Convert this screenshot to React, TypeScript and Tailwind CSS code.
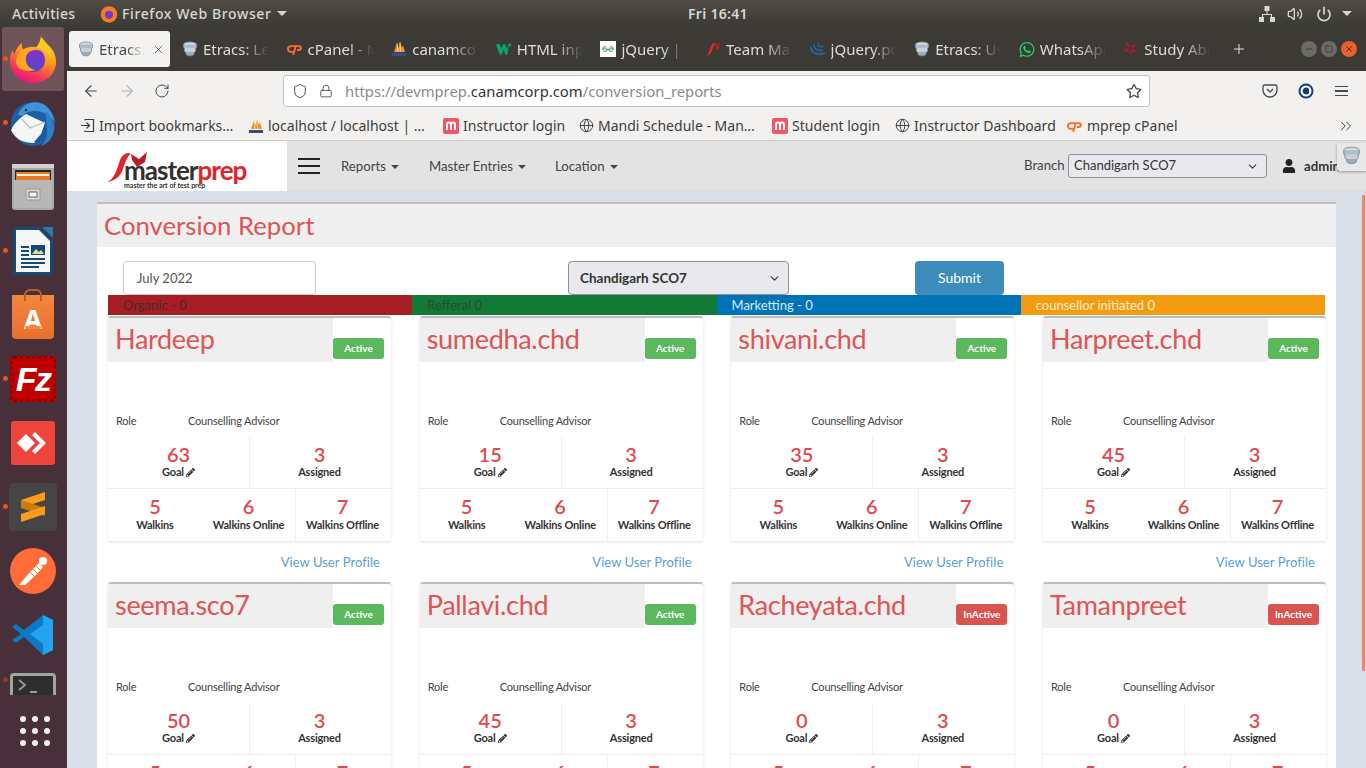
import { FaWhatsapp, FaPencilAlt, FaUser, FaRegStar } from 'react-icons/fa';
import { ChevronDown, ArrowLeft, ArrowRight, RotateCw, Lock, Shield, Globe, ChevronsRight, Plus, X, Minus, Square, Power, Volume2 } from 'lucide-react';

const SANS = "font-['Noto_Sans',sans-serif]";
const PAGE = "font-['Lato','Noto_Sans',sans-serif]";

const DbIcon = ({ size = 16 }: { size?: number }) => (
	<svg width={size} height={size} viewBox="0 0 16 16">
		<ellipse cx="8" cy="3.5" rx="6.5" ry="2.5" fill="#d5dde4" stroke="#7d8a96" strokeWidth="0.8" />
		<path d="M1.5 3.5v3c0 1.4 2.9 2.5 6.5 2.5s6.500-1.100 6.500-2.500v-3" fill="#aebbc6" stroke="#7d8a96" strokeWidth="0.8" />
		<path d="M2.500 7v3c0 1.300 2.500 2.300 5.500 2.300s5.500-1 5.500-2.300V7" fill="#c6d0d8" stroke="#7d8a96" strokeWidth="0.8" />
		<path d="M4 11v2c0 1 1.800 1.800 4 1.800s4-.8 4-1.800v-2" fill="#9fadb9" stroke="#7d8a96" strokeWidth="0.8" />
	</svg>
);

const CpanelIcon = () => (
	<svg width="17" height="12" viewBox="0 0 17 12">
		<path d="M6 2H4a4 4 0 0 0 0 8h2l1-2H4.200a2 2 0 0 1 0-4H8L5.500 12h2.300L10 4h2.600a1 1 0 0 1 0 2H11l-.6 2h2.400a3 3 0 0 0 0-6H6z" fill="#ff6c2c" />
	</svg>
);

const PmaIcon = () => (
	<svg width="16" height="16" viewBox="0 0 16 16">
		<path d="M3 11L6 2l1.500 5L9 1l2 6 1-3 2 7z" fill="#f0902a" />
		<path d="M6 2l1 9M9 1l.5 10" stroke="#fff" strokeWidth="0.6" />
		<rect x="1" y="12" width="14" height="3" fill="#2f4f86" />
	</svg>
);

const MIcon = () => (
	<svg width="16" height="16" viewBox="0 0 16 16">
		<rect width="16" height="16" rx="2" fill="#ee5763" />
		<path d="M4 12V6.500a1.800 1.800 0 0 1 4 0V12M8 6.500a1.800 1.800 0 0 1 4 0V12" stroke="#fff" strokeWidth="2" fill="none" />
	</svg>
);

const W3Icon = () => (
	<svg width="17" height="12" viewBox="0 0 17 12">
		<path d="M0 1h4l2 5 1.500-5h2L12 6l1-5h1l-2 11h-2L8 6l-2 6H4z" fill="#04aa6d" />
		<rect x="14" y="0" width="2" height="3" fill="#04aa6d" />
	</svg>
);

const GfgIcon = () => (
	<svg width="16" height="16" viewBox="0 0 16 16">
		<rect width="16" height="16" fill="#fff" />
		<path d="M7.500 8H2.500a2.500 2.500 0 0 1 4-1.800M7.500 8a2.500 2.500 0 0 1-4.400 1.600M8.500 8h5a2.500 2.500 0 0 0-4-1.800M8.500 8a2.500 2.500 0 0 0 4.400 1.600" stroke="#2f8d46" strokeWidth="1" fill="none" />
	</svg>
);

const SwooshIcon = ({ size = 14 }: { size?: number }) => (
	<svg width={size} height={size} viewBox="0 0 14 14">
		<path d="M1 13C4 11 4 5 6.500 2.500 7.500 1.500 9 1 9.500 2 8 3 7 6 6 9 5 11.500 3 13 1 13z" fill="#e0252b" />
		<path d="M9 2l2 2 2-3-.5 5L10.500 8 9 4z" fill="#b81f25" />
	</svg>
);

const JqIcon = () => (
	<svg width="16" height="16" viewBox="0 0 16 16" fill="none" stroke="#1a6fb3">
		<path d="M1 6c0 6 7 9 14 6" strokeWidth="1.600" />
		<path d="M4 3.500c-.5 4 4 7 9 5.500" strokeWidth="1.400" />
		<path d="M8 1.500c-.5 3 2 5 5.500 4" strokeWidth="1.200" />
	</svg>
);

const StudyIcon = () => (
	<svg width="14" height="16" viewBox="0 0 14 16" fill="#c8102e">
		<path d="M2 0l4 6-4-1zM0 7l6 1.500L2 11zM5 10l3-1-1 6zM7 5l6-2-5 4.500zM8 8.500l6 1-5 2z" />
	</svg>
);

const tabs = [
	{ t: 'Etracs: Le', i: <DbIcon /> },
	{ t: 'cPanel - Main', i: <CpanelIcon /> },
	{ t: 'canamcorp', i: <PmaIcon /> },
	{ t: 'HTML inpu', i: <W3Icon /> },
	{ t: 'jQuery | dat', i: <GfgIcon /> },
	{ t: 'Team Mas', i: <SwooshIcon size={16} /> },
	{ t: 'jQuery.pos', i: <JqIcon /> },
	{ t: 'Etracs: Us', i: <DbIcon /> },
	{ t: 'WhatsApp', i: <FaWhatsapp size={17} className="text-[#25d366]" /> },
	{ t: 'Study Abr', i: <StudyIcon /> },
];

const bookmarks = [
	{ w: 'w-[169px]', t: 'Import bookmarks…', i: <ImportIcon /> },
	{ w: 'w-[195px]', t: 'localhost / localhost | …', i: <PmaIcon /> },
	{ w: 'w-[135px]', t: 'Instructor login', i: <MIcon /> },
	{ w: 'w-[194px]', t: 'Mandi Schedule - Man…', i: <Globe size={15} strokeWidth={1.5} /> },
	{ w: 'w-[122px]', t: 'Student login', i: <MIcon /> },
	{ w: 'w-[173px]', t: 'Instructor Dashboard', i: <Globe size={15} strokeWidth={1.5} /> },
	{ w: 'w-[130px]', t: 'mprep cPanel', i: <CpanelIcon /> },
];

function ImportIcon() {
	return (
		<svg width="15" height="15" viewBox="0 0 15 15" fill="none" stroke="#3d3d3d" strokeWidth="1.200">
			<path d="M5 2.500V1.500h8.500v12H5v-1M1 7.500h8M6.500 4.500l3 3-3 3" />
		</svg>
	);
}

const FirefoxLogo = () => (
	<svg width="46" height="48" viewBox="0 0 46 48">
		<defs>
			<linearGradient id="ffa" x1="0.800" y1="0" x2="0.350" y2="1">
				<stop offset="0" stopColor="#ffe226" />
				<stop offset="0.450" stopColor="#ff9a1a" />
				<stop offset="0.800" stopColor="#f8345a" />
				<stop offset="1" stopColor="#e8128a" />
			</linearGradient>
			<linearGradient id="ffb" x1="0.600" y1="0" x2="0.400" y2="1">
				<stop offset="0" stopColor="#8a2fc8" />
				<stop offset="1" stopColor="#4f4ac8" />
			</linearGradient>
		</defs>
		<path d="M31 1c1 5 6 7 10 12 4 5 5 10 5 14 0 12-10 21-23 21C10 48 0 38 0 26c0-5 1-8 2.500-11 .5 2 1 3 2 4C6 14 9 10 12 8c-.5 3 0 5 1.500 7 3-2 8-2 12-2 3-3 5-7 5.500-12z" fill="url(#ffa)" />
		<circle cx="23" cy="25" r="12" fill="url(#ffb)" />
		<path d="M6 27c0-8 6-14 14-15 6-1 11 1 14 5-4-2-9-3-13-1-3 1-5 4-5 7-1 6 3 11 10 12-10 3-20-1-20-8z" fill="#ffa51f" />
		<path d="M26 13c4-3 6-7 6-10 5 5 10 12 9 21-2-6-8-11-15-11z" fill="#ffc81f" />
	</svg>
);

const ThunderbirdLogo = () => (
	<svg width="48" height="48" viewBox="0 0 48 48">
		<circle cx="24" cy="25" r="22" fill="#1d5fa6" />
		<path d="M9 16C12 6 24 0 34 5c6 3 10 10 12 18-6-7-12-11-19-11-6 0-11 1-13 5z" fill="#3f94d6" />
		<path d="M36 12c5 4 9 10 9 17 0 9-6 16-13 18 4-4 7-10 6-17-.5-6-1-12-2-18z" fill="#2f7fc4" />
		<circle cx="17" cy="11" r="1.200" fill="#17243a" />
		<path d="M2 31c3-7 9-12 15-16l19 9-2 14-9 6C14 44 6 40 2 31z" fill="#f6f6f6" />
		<path d="M13 20l8 9 15-6" fill="none" stroke="#b4bec7" strokeWidth="1.200" />
		<path d="M36 24l1 12-8 8-4-1 7-8z" fill="#1a5aa0" />
	</svg>
);

const FilesLogo = () => (
	<svg width="42" height="46" viewBox="0 0 42 46">
		<rect x="0" y="0" width="42" height="46" rx="3" fill="#a9a9a9" />
		<rect x="0" y="0" width="42" height="4" fill="#d0d0d0" />
		<rect x="3" y="6" width="36" height="10" fill="#262626" />
		<rect x="4" y="8" width="34" height="8" fill="#e57c24" />
		<rect x="5" y="10" width="32" height="2" fill="#fff2dc" />
		<rect x="2" y="16" width="38" height="28" fill="#b7b7b7" />
		<rect x="14" y="25" width="14" height="11" rx="1.500" fill="#d7d7d7" stroke="#989898" />
		<rect x="17" y="28" width="8" height="5" fill="#f3f3f3" stroke="#444" strokeWidth="0.800" />
	</svg>
);

const WriterLogo = () => (
	<svg width="40" height="48" viewBox="0 0 40 48">
		<path d="M0 3a3 3 0 0 1 3-3h24l13 13v32a3 3 0 0 1-3 3H3a3 3 0 0 1-3-3z" fill="#144a75" />
		<path d="M3 3h23l11 11v31H3z" fill="#f4f6f8" />
		<path d="M29 0h11v11z" fill="#18a0d8" opacity="0.700" />
		<path d="M8 20h8M8 24h8M8 28h8M8 32h24M8 36h24M8 40h18" stroke="#144a75" strokeWidth="2" />
		<rect x="18" y="18" width="14" height="10" fill="#144a75" />
		<path d="M19 27l4-5 3 3 2-2 3 4z" fill="#e7d9a6" />
	</svg>
);

const SoftwareLogo = () => (
	<div className="relative mt-[4px] flex h-[44px] w-[42px] items-end justify-center rounded-b-sm bg-gradient-to-b from-[#f0883e] to-[#e86f2c]">
		<div className="absolute top-[-6px] left-[12px] h-[12px] w-[18px] rounded-t-md border-2 border-b-0 border-[#c55a20]" />
		<span className="mb-[5px] font-['Noto_Sans',sans-serif] text-[26px] leading-[30px] font-bold text-white">A</span>
		<span className="absolute bottom-[10px] left-[13px] h-[3px] w-[16px] rounded-sm bg-[#f0883e]" />
	</div>
);

const FilezillaLogo = () => (
	<div className="flex h-[46px] w-[46px] items-center justify-center rounded-sm border-[3px] border-dotted border-[#8f0000] bg-[#bf0000]">
		<span className="font-['Liberation_Sans',sans-serif] text-[34px] leading-none font-bold tracking-tighter text-white italic">Fz</span>
	</div>
);

const AnydeskLogo = () => (
	<svg width="44" height="44" viewBox="0 0 44 44">
		<rect width="44" height="44" rx="3" fill="#ef443b" />
		<path d="M15 13l9 9-9 9-9-9z" fill="#fff" />
		<path d="M24 11l11 11-11 11-3-3 8-8-8-8z" fill="#fff" />
	</svg>
);

const SublimeLogo = () => (
	<div className="flex h-[48px] w-[48px] items-center justify-center rounded-sm bg-[#444544]">
		<svg width="26" height="32" viewBox="0 0 26 32">
			<path d="M1 9L25 1v8L1 17z" fill="#ff9a1a" />
			<path d="M1 9l24 8v8L1 17z" fill="#c97a12" />
			<path d="M1 23l24-8v8L1 31z" fill="#ff9a1a" />
		</svg>
	</div>
);

const PostmanLogo = () => (
	<svg width="46" height="46" viewBox="0 0 46 46">
		<circle cx="23" cy="23" r="23" fill="#ff6c37" />
		<path d="M9 37l11-13 9-9 4 4-8 9-10 9z" fill="#fff" />
		<circle cx="33" cy="13" r="4" fill="#fff" />
		<path d="M20 24l5 5M23 21l5 5M26 18l4 4" stroke="#ff6c37" strokeWidth="1" />
	</svg>
);

const VscodeLogo = () => (
	<svg width="42" height="42" viewBox="0 0 42 42">
		<path d="M31 1l10 5v30l-10 5L12 23 4 29 0 26l9-6-9-7 4-3 8 6z" fill="#0b79c4" />
		<path d="M31 1l10 5v30l-10 5zM31 11L18 20l13 10z" fill="#23a3f0" fillRule="evenodd" />
	</svg>
);

const TerminalLogo = () => (
	<div className="mt-[-10px] h-[22px] w-[46px] overflow-hidden rounded-t-sm border-[3px] border-b-0 border-[#a3a3a3] bg-[#2e2e2e] pt-[3px] pl-[5px]">
		<svg width="26" height="14" viewBox="0 0 26 14" fill="none" stroke="#9a9a9a" strokeWidth="1.800">
			<path d="M1 1l6 5-6 5M12 13h7" />
		</svg>
	</div>
);

const dock = [
	{ i: <FirefoxLogo />, dot: true, active: true },
	{ i: <ThunderbirdLogo />, dot: true },
	{ i: <FilesLogo /> },
	{ i: <WriterLogo />, dot: true },
	{ i: <SoftwareLogo /> },
	{ i: <FilezillaLogo />, dot: true },
	{ i: <AnydeskLogo /> },
	{ i: <SublimeLogo />, dot: true },
	{ i: <PostmanLogo /> },
	{ i: <VscodeLogo /> },
];

const users = [
	{ name: 'Hardeep', goal: 63, active: true },
	{ name: 'sumedha.chd', goal: 15, active: true },
	{ name: 'shivani.chd', goal: 35, active: true },
	{ name: 'Harpreet.chd', goal: 45, active: true },
	{ name: 'seema.sco7', goal: 50, active: true },
	{ name: 'Pallavi.chd', goal: 45, active: true },
	{ name: 'Racheyata.chd', goal: 0, active: false },
	{ name: 'Tamanpreet', goal: 0, active: false },
];

const Stat = ({ n, children, className = '', labelGap = 'mt-[-1px]' }: { n: number; children: React.ReactNode; className?: string; labelGap?: string }) => (
	<div className={`flex flex-col items-center pt-[5px] ${className}`}>
		<span className="text-[20px] leading-[24px] font-semibold text-[#dd4b4f]">{n}</span>
		<span className={`flex items-center gap-[2px] text-[11px] leading-[14px] font-bold tracking-[-0.2px] whitespace-nowrap text-[#333] ${labelGap}`}>{children}</span>
	</div>
);

const UserCard = ({ name, goal, active }: { name: string; goal: number; active: boolean }) => (
	<div className="h-[266px]">
		<div className="h-[225px] rounded-t-[3px] border-t-[2px] border-[#bdbdbd] bg-white shadow-[0_1px_3px_rgba(0,0,0,0.12)]">
			<div className="flex h-[44px]">
				<div className="h-[44px] w-[225px] bg-[#efefef] pl-[7px] text-[27px] leading-[42px] tracking-[-0.3px] text-[#dd5555]">{name}</div>
				<span
					className={`mt-[20px] flex h-[21px] w-[51px] items-center justify-center rounded-[3px] text-[10px] leading-[19px] font-bold text-white ${
						active ? 'bg-[#5cb85c]' : 'bg-[#d9534f]'
					}`}
				>
					{active ? 'Active' : 'InActive'}
				</span>
			</div>
			<div className="flex h-[75px] items-end pb-[9px] pl-[8px] text-[11px] leading-[14px] tracking-[-0.2px] text-[#444]">
				<span className="w-[72px]">Role</span>
				<span>Counselling Advisor</span>
			</div>
			<div className="flex h-[52px] border-b border-[#eee]">
				<Stat n={goal} className="w-[142px] border-r border-[#eee]">
					Goal <FaPencilAlt size={9} />
				</Stat>
				<Stat n={3} className="flex-1 pr-[2px]">
					Assigned
				</Stat>
			</div>
			<div className="flex h-[52px]">
				<Stat n={5} labelGap="mt-0" className="w-[94px]">
					Walkins
				</Stat>
				<Stat n={6} labelGap="mt-0" className="w-[94px] border-r border-[#eee]">
					Walkins Online
				</Stat>
				<Stat n={7} labelGap="mt-0" className="flex-1 pr-[2px]">
					Walkins Offline
				</Stat>
			</div>
		</div>
		<div className="pt-[12px] pr-[11px] text-right text-[13px] leading-[18px] tracking-[0.05px] text-[#5a9fd4]">View User Profile</div>
	</div>
);

function NavItem({ label, className }: { label: string; className: string }) {
	return (
		<div className={`flex items-center gap-[5px] pt-[2px] ${className}`}>
			{label}
			<span className="h-0 w-0 border-x-[4px] border-t-[4px] border-x-transparent border-t-[#444]" />
		</div>
	);
}

export default function App() {
	return (
		<div className={`h-[768px] w-[1366px] overflow-hidden bg-[#d8dfe8] ${SANS}`}>
			{/* gnome top bar */}
			<div className="flex h-[27px] items-center bg-gradient-to-b from-[#4f4c45] to-[#3b3a35] text-[14px] font-medium tracking-[0.3px] whitespace-nowrap text-[#d8d8d2]">
				<div className="flex w-[688px] items-center">
					<span className="ml-[12px] w-[88px]">Activities</span>
					<svg width="18" height="18" viewBox="0 0 46 48">
						<circle cx="23" cy="25" r="22" fill="#ff7a1a" />
						<circle cx="23" cy="26" r="11" fill="#6b3fd4" />
					</svg>
					<span className="ml-[4px] tracking-[0.62px]">Firefox Web Browser</span>
					<span className="ml-[5px] h-0 w-0 border-x-[5px] border-t-[5px] border-x-transparent border-t-[#d8d8d2]" />
				</div>
				<span className="w-[58px] font-semibold">Fri 16:41</span>
				<svg className="ml-[513px]" width="16" height="16" viewBox="0 0 16 16" fill="#d8d8d2">
					<path d="M5.500 0h5v5h-5zM0 11h5v5H0zM11 11h5v5h-5zM7.500 5h1v3H13v3h-1V9H4v2H3V8h4.500z" />
				</svg>
				<Volume2 className="ml-[12px]" size={16} />
				<Power className="ml-[13px]" size={16} strokeWidth={2.500} />
				<span className="ml-[10px] h-0 w-0 border-x-[5px] border-t-[5px] border-x-transparent border-t-[#d8d8d2]" />
			</div>

			<div className="flex h-[741px]">
				{/* dock */}
				<div className="relative flex w-[67px] shrink-0 flex-col items-start bg-[#47303a] pl-[2px]">
					{dock.map((d, idx) => (
						<div
							key={idx}
							className={`relative flex h-[64px] w-[62px] shrink-0 items-center justify-center rounded-[3px] ${d.active ? 'bg-[#6f5459]' : ''}`}
						>
							{d.i}
							{d.dot && <span className="absolute top-[29px] left-[1px] h-[5px] w-[5px] rounded-full bg-[#e95420]" />}
						</div>
					))}
					<div className="relative flex h-[28px] w-[62px] shrink-0 items-end justify-center">
						<TerminalLogo />
						<span className="absolute top-[10px] left-[1px] h-[5px] w-[5px] rounded-full bg-[#8a3a28]" />
					</div>
					<div className="mt-[21px] grid grid-cols-3 gap-x-[6px] gap-y-[6px] self-center">
						{Array.from({ length: 9 }).map((_, i) => (
							<span key={i} className="h-[6px] w-[6px] rounded-full bg-[#f0eef0]" />
						))}
					</div>
				</div>

				<div className="flex min-w-0 flex-1 flex-col">
					{/* tab strip */}
					<div className="flex h-[44px] shrink-0 items-center bg-[#3b3a35] pl-[2px] text-[15px] text-[#dedcd8]">
						<div className="mr-[4px] flex h-[36px] w-[101px] shrink-0 items-center rounded-[3px] bg-[#f3f2f0] pl-[9px] text-[#4a4a4a]">
							<DbIcon />
							<span className="ml-[5px] w-[46px] overflow-hidden whitespace-nowrap [mask-image:linear-gradient(to_right,black_60%,transparent)]">Etracs: Us</span>
							<X className="ml-[7px]" size={13} strokeWidth={1.500} />
						</div>
						{tabs.map((t) => (
							<div key={t.t} className="flex w-[104.600px] shrink-0 items-center pl-[8px]">
								<span className="flex w-[16px] shrink-0 justify-center">{t.i}</span>
								<span className="ml-[5px] w-[66px] overflow-hidden whitespace-nowrap [mask-image:linear-gradient(to_right,black_60%,transparent)]">{t.t}</span>
							</div>
						))}
						<Plus className="ml-[11px]" size={16} strokeWidth={1.500} />
						<div className="ml-[54px] flex gap-[4px]">
							<span className="flex h-[16px] w-[16px] items-center justify-center rounded-full bg-[#6b6a65]"><Minus size={10} className="text-[#33322e]" /></span>
							<span className="flex h-[16px] w-[16px] items-center justify-center rounded-full bg-[#6b6a65]"><Square size={8} className="text-[#33322e]" /></span>
							<span className="flex h-[16px] w-[16px] items-center justify-center rounded-full bg-[#e9602c]"><X size={10} className="text-[#4a1c08]" /></span>
						</div>
					</div>

					{/* url toolbar */}
					<div className="flex h-[40px] shrink-0 items-center bg-[#f2f1ef] text-[#4a4a4a]">
						<ArrowLeft className="ml-[15px]" size={18} strokeWidth={1.500} />
						<ArrowRight className="ml-[18px] text-[#b4b4b4]" size={18} strokeWidth={1.500} />
						<RotateCw className="ml-[18px]" size={16} strokeWidth={1.500} />
						<div className="ml-[113px] flex h-[32px] w-[867px] items-center rounded-[3px] border border-[#c4c4c4] bg-white">
							<Shield className="ml-[8px]" size={16} strokeWidth={1.500} />
							<Lock className="ml-[11px]" size={14} strokeWidth={1.500} />
							<span className="ml-[12px] flex-1 text-[14.800px] text-[#8a8a8a]">
								https://devmprep.<span className="text-[#333]">canamcorp.com</span>/conversion_reports
							</span>
							<FaRegStar className="mr-[7px]" size={16} />
						</div>
						<svg className="ml-[112px]" width="16" height="14" viewBox="0 0 16 14" fill="none" stroke="#4a4a4a" strokeWidth="1.300">
							<path d="M1 2.500A1.500 1.500 0 0 1 2.500 1h11A1.500 1.500 0 0 1 15 2.500V6a7 7 0 0 1-14 0z" />
							<path d="M5 5l3 3 3-3" />
						</svg>
						<svg className="ml-[20px]" width="16" height="16" viewBox="0 0 16 16">
							<circle cx="8" cy="8" r="7.500" fill="#123f7a" />
							<circle cx="8" cy="8" r="5.500" fill="#fff" />
							<path d="M11 6a3.500 3.500 0 1 0 0 4z" fill="#123f7a" />
						</svg>
						<div className="ml-[21px] flex w-[13px] flex-col gap-[3px]">
							<span className="h-[1.500px] bg-[#4a4a4a]" />
							<span className="h-[1.500px] bg-[#4a4a4a]" />
							<span className="h-[1.500px] bg-[#4a4a4a]" />
						</div>
					</div>

					{/* bookmarks */}
					<div className="flex h-[30px] shrink-0 items-center border-b border-[#cfcfcf] bg-[#f2f1ef] pl-[12px] text-[14px] whitespace-nowrap text-[#3d3d3d]">
						{bookmarks.map((b) => (
							<div key={b.t} className={`flex items-center gap-[4px] ${b.w}`}>
								<span className="flex w-[16px] justify-center">{b.i}</span>
								<span>{b.t}</span>
							</div>
						))}
						<ChevronsRight className="ml-[140px]" size={18} strokeWidth={1.300} />
					</div>

					{/* site nav */}
					<div className={`relative flex h-[50px] shrink-0 items-center bg-[#e3e3e3] text-[13.200px] text-[#444] ${PAGE}`}>
						<div className="flex h-[50px] w-[220px] items-start bg-white pt-[10px] pl-[39px]">
							<svg width="42" height="32" viewBox="0 0 42 32">
								<path d="M1 31C8 29 11 18 14 9c2-5 7-9 11-6-4 2-6 9-8 15-2 7-8 12-16 13z" fill="#e0252b" />
								<path d="M25 3l8 5 8-7-2 10-8 5-5-7z" fill="#b81f25" />
							</svg>
							<div className="mt-[8px] ml-[-24px] flex flex-col">
								<span className="text-[26px] leading-[22px] font-bold tracking-[-1px] text-[#33302e]">
									master<span className="text-[#e0252b]">prep</span>
								</span>
								<span className="text-[7px] leading-[8px] font-bold text-[#33302e]">master the art of test prep</span>
							</div>
						</div>
						<div className="ml-[11px] flex w-[22px] flex-col gap-[5px]">
							<span className="h-[2px] bg-[#222]" />
							<span className="h-[2px] bg-[#222]" />
							<span className="h-[2px] bg-[#222]" />
						</div>
						<NavItem label="Reports" className="ml-[21px] w-[88px]" />
						<NavItem label="Master Entries" className="w-[126px]" />
						<NavItem label="Location" className="w-[80px]" />
						<span className="ml-[389px] w-[44px]">Branch</span>
						<div className="flex h-[24px] w-[199px] items-center justify-between rounded-[3px] border border-[#8f8f9d] bg-[#e9e9ed] pr-[7px] pl-[5px] text-[13px] text-[#333]">
							Chandigarh SCO7
							<ChevronDown size={13} strokeWidth={2} />
						</div>
						<FaUser className="ml-[15px] text-[#222]" size={14} />
						<span className="ml-[8px] pt-[2px] font-bold text-[#333]">admin</span>
						<div className="absolute top-[2px] right-0 flex h-[28px] w-[29px] items-start justify-center rounded-bl-[3px] bg-[#e8e8e8] pt-[3px] shadow-[0_1px_3px_rgba(0,0,0,0.35)]">
							<DbIcon size={19} />
						</div>
					</div>

					{/* page */}
					<div className={`relative flex-1 overflow-hidden px-[30px] pt-[11px] ${PAGE}`}>
						<div className="absolute top-[4px] right-[1px] h-[476px] w-[3px] bg-[#f0885f]" />
						<div className="bg-white">
							<div className="h-[45px] border-t-[2px] border-[#c0c0c0] bg-[#efefef] pl-[7px] text-[25.700px] leading-[42px] text-[#dd5555]">Conversion Report</div>
							<div className="flex h-[48px] items-end pl-[26px] text-[13px] leading-[18px]">
								<div className="flex h-[34px] w-[193px] items-center rounded-[4px] border border-[#ccc] pl-[13px] text-[#555]">July 2022</div>
								<div className="ml-[252px] flex h-[34px] w-[221px] items-center justify-between rounded-[4px] border border-[#8f8f9d] bg-[#e9e9ed] pr-[7px] pl-[11px] text-[13.500px] font-bold text-[#333]">
									<span>Chandigarh SCO7</span>
									<ChevronDown size={13} strokeWidth={2} />
								</div>
								<div className="ml-[126px] flex h-[34px] w-[89px] items-center justify-center rounded-[4px] bg-[#3c8dbc] text-[14px] text-white">Submit</div>
							</div>
							<div className="mx-[11px] grid h-[20px] grid-cols-4 text-[13px] leading-[20px]">
								<div className="bg-[#a61d24] pl-[15px] text-[#4a2a2a]">Organic - 0</div>
								<div className="bg-[#127a37] pl-[15px] text-[#2b4a35]">Refferal 0</div>
								<div className="bg-[#0073b7] pl-[15px] text-[#d7e9f5]">Marketting - 0</div>
								<div className="bg-[#f39c12] pl-[15px] text-[#fdeccc]">counsellor initiated 0</div>
							</div>
							<div className="mt-[1px] mr-[10px] ml-[11px] grid grid-cols-4 gap-x-[28.670px]">
								{users.map((u) => (
									<UserCard key={u.name} {...u} />
								))}
							</div>
						</div>
					</div>
				</div>
			</div>
		</div>
	);
}
